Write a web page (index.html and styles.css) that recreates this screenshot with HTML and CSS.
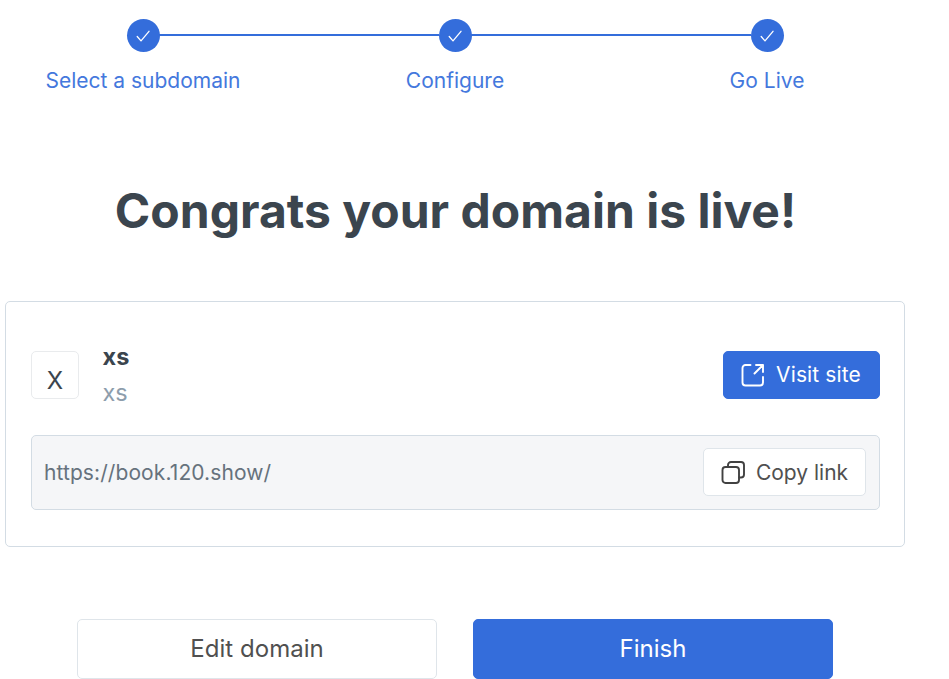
FILE: index.html
```html
<!DOCTYPE html>
<html lang="en">
<head>
<meta charset="utf-8">
<title>Domain setup</title>
<link rel="stylesheet" href="styles.css">
</head>
<body>
<main class="page">
  <ol class="steps">
    <li class="step"><span class="dot"><svg viewBox="0 0 16 16"><path d="M2.2 8.500 6 12.900 14 3.300"/></svg></span><span class="label">Select a subdomain</span></li>
    <li class="step"><span class="dot"><svg viewBox="0 0 16 16"><path d="M2.2 8.500 6 12.900 14 3.300"/></svg></span><span class="label">Configure</span></li>
    <li class="step"><span class="dot"><svg viewBox="0 0 16 16"><path d="M2.2 8.500 6 12.900 14 3.300"/></svg></span><span class="label">Go Live</span></li>
  </ol>
  <h1 class="title">Congrats your domain is live!</h1>
  <section class="card">
    <div class="site">
      <div class="avatar">X</div>
      <div class="info"><div class="name">xs</div><div class="sub">xs</div></div>
      <button class="btn primary visit"><svg viewBox="0 0 24 24"><path d="M9.500 2H4.500a3 3 0 0 0-3 3v14.500a3 3 0 0 0 3 3h14.500a3 3 0 0 0 3-3V14M15 2h7v7M22 2l-8.500 8.500"/></svg><span>Visit site</span></button>
    </div>
    <div class="link">
      <span class="url">https://book.120.show/</span>
      <button class="btn copy"><svg viewBox="0 0 24 24"><rect x="1.500" y="7" width="16.500" height="16" rx="3"/><path d="M7 7V5a3 3 0 0 1 3-3h10a3 3 0 0 1 3 3v9.500a3 3 0 0 1-3 3h-2"/></svg><span>Copy link</span></button>
    </div>
  </section>
  <div class="actions">
    <button class="btn large">Edit domain</button>
    <button class="btn large primary">Finish</button>
  </div>
</main>
</body>
</html>
```
FILE: styles.css
```css
* { box-sizing: border-box; }
html, body { margin: 0; height: 100%; overflow: hidden; background: #fff; }
body { font-family: Inter, sans-serif; color: #3b454e; }
.page { width: 900px; margin-left: 5px; padding-top: 19px; }
.steps { display: grid; grid-template-columns: repeat(3, 312px); margin: 0 0 0 -18px; padding: 0; list-style: none; }
.step { position: relative; display: flex; flex-direction: column; align-items: center; color: #4478dd; }
.step + .step::before { content: ""; position: absolute; top: 15px; left: -140px; width: 280px; height: 2px; background: #346ddb; }
.dot { width: 33px; height: 33px; border-radius: 50%; background: #346ddb; display: flex; align-items: center; justify-content: center; }
svg { fill: none; stroke: currentColor; stroke-width: 1.9; stroke-linecap: round; stroke-linejoin: round; flex: none; }
.dot svg { width: 16px; height: 16px; stroke: #fff; stroke-width: 1.3; }
.label { margin-top: 14px; font-size: 21px; line-height: 30px; white-space: nowrap; }
.title { margin: 85px 0 0; height: 60px; font-size: 48px; line-height: 60px; font-weight: 700; text-indent: 1px; text-align: center; white-space: nowrap; }
.card { margin-top: 60px; height: 246px; border: 1px solid #d3dce4; border-radius: 5px; padding: 38px 24px 0 25px; }
.site { display: flex; height: 70px; align-items: center; }
.avatar { width: 48px; height: 48px; border: 1px solid #e9ebed; border-radius: 5px; font-size: 24px; line-height: 58px; text-align: center; }
.info { margin-left: 23.5px; flex: 1; font-size: 23.5px; line-height: 36px; }
.name { font-weight: 700; }
.sub { color: #8d9dac; }
.btn { font: 400 21px/1 Inter, sans-serif; display: flex; align-items: center; justify-content: center; padding: 0; border: 1px solid #dfe5ea; border-radius: 5px; background: #fff; color: #505050; white-space: nowrap; }
.btn svg { width: 24px; height: 24px; margin-right: 11px; color: #414141; }
.primary { background: #346ddb; border-color: #346ddb; color: #fff; }
.visit { width: 157px; height: 48px; letter-spacing: .12px; }
.visit svg { color: #fff; margin-left: -1px; }
.visit span { padding-bottom: 2px; }
.link { margin-top: 25px; height: 75px; border: 1px solid #d3dce4; border-radius: 5px; background: #f5f6f8; display: flex; align-items: center; justify-content: space-between; padding: 0 13px 2px 12px; }
.url { font-size: 21px; letter-spacing: .09px; color: #66727d; padding-top: 2px; }
.copy { width: 163px; height: 48px; }
.copy span { padding-top: 2px; }
.actions { margin: 72px 0 0 72px; display: flex; gap: 36px; }
.large { width: 360px; height: 60px; font-size: 24px; letter-spacing: .05px; }
```
